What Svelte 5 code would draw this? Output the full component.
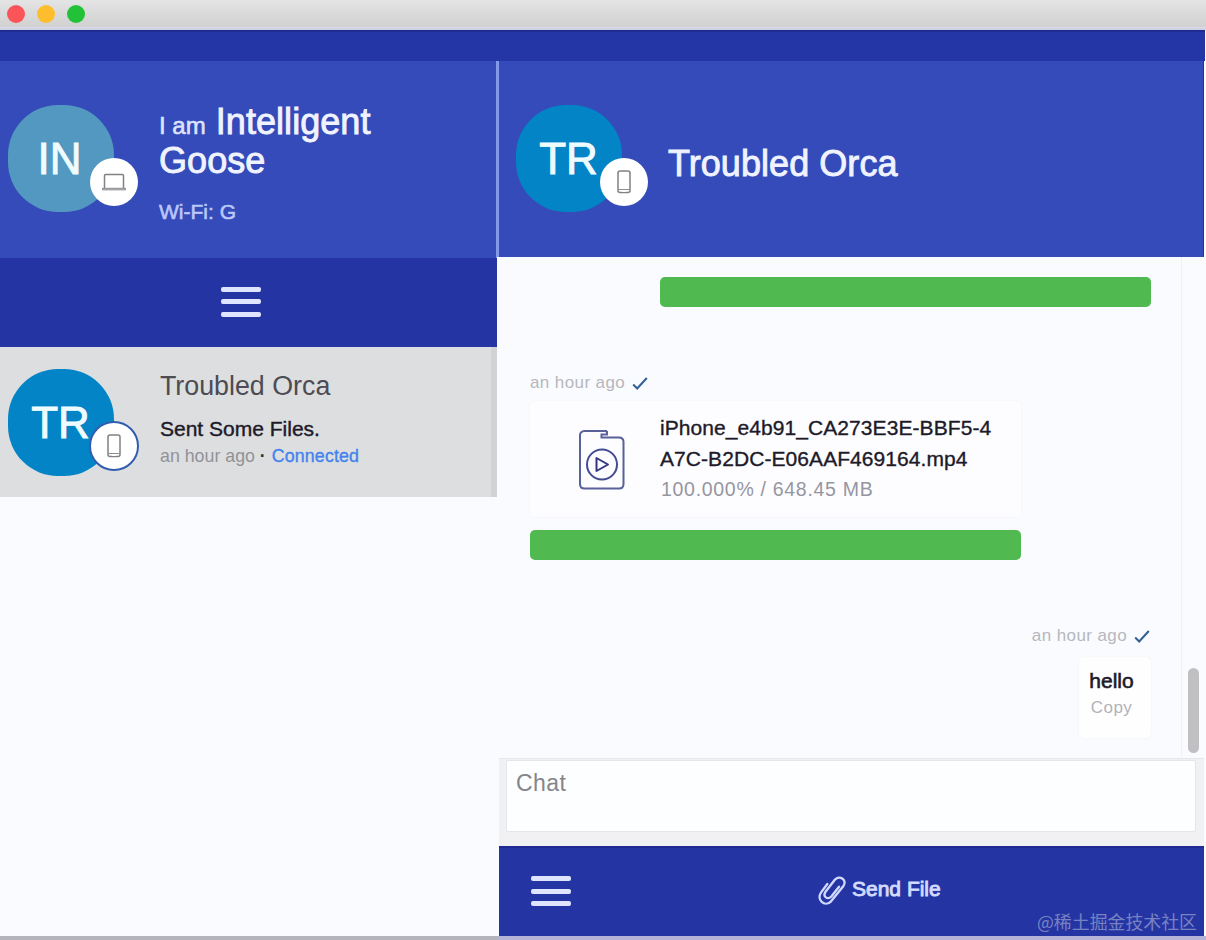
<script>
  const lights = ['#fa5558', '#fdbd2d', '#22c238'];
</script>

{#snippet phone()}
  <svg class="phone" viewBox="0 0 16 26" fill="none" stroke="#818186">
    <rect x="2" y="2" width="12" height="21.5" rx="2" stroke-width="1.5" />
    <path d="M2.500 20.500h11" stroke-width=".9" />
    <path d="M6 22.300h4" stroke="#fff" stroke-width="1.300" />
  </svg>
{/snippet}

{#snippet laptop()}
  <svg class="laptop" viewBox="0 0 26 20" fill="none" stroke="#818186">
    <path d="M3.500 16V3.700q0-1.200 1.200-1.200h16.600q1.200 0 1.200 1.200V16" stroke-width="1.500" />
    <path d="M1.500 16.300h23v1.500h-23z" stroke-width="1" />
  </svg>
{/snippet}

{#snippet check()}
  <svg class="check" viewBox="0 0 16 13" fill="none" stroke="#316094" stroke-width="2"><path d="M1.200 7.500l4 4L14.800 1" /></svg>
{/snippet}

{#snippet menu()}
  <span class="menu"><i></i><i></i><i></i></span>
{/snippet}

<div class="window">
  <div class="titlebar">
    {#each lights as color}<span class="light" style="background:{color}"></span>{/each}
  </div>
  <div class="band"></div>
  <div class="main">
    <aside>
      <header class="me">
        <div class="avatar teal">IN<span class="badge">{@render laptop()}</span></div>
        <div class="who">
          <h1><small>I am</small> Intelligent<br />Goose</h1>
          <p>Wi-Fi: G</p>
        </div>
      </header>
      <div class="bar">{@render menu()}</div>
      <div class="contact">
        <div class="avatar">TR<span class="badge outlined">{@render phone()}</span></div>
        <div class="summary">
          <div class="name">Troubled Orca</div>
          <div class="last">Sent Some Files.</div>
          <div class="status">an hour ago <b>·</b> <em>Connected</em></div>
        </div>
      </div>
    </aside>
    <section>
      <header class="peer">
        <div class="avatar">TR<span class="badge shifted">{@render phone()}</span></div>
        <h2>Troubled Orca</h2>
      </header>
      <div class="chat">
        <div class="messages">
          <div class="progress sent"></div>
          <div class="time">an hour ago {@render check()}</div>
          <div class="file">
            <svg class="video" viewBox="0 0 48 62" fill="none" stroke="#5a6099" stroke-width="2">
              <path d="M28 3.300V2H6.500Q2 2.500 2 6.500V55q0 4.500 4.500 4.500H41q4.500 0 4.500-4.500V13q0-4.500-4.500-4.500H23.500V5.500H29V2" />
              <circle cx="24" cy="35.500" r="15" stroke="#454b91" />
              <path d="M18.500 29v13l11.500-6.500z" stroke="#34377d" stroke-linejoin="round" />
            </svg>
            <div class="details">
              <div>iPhone_e4b91_CA273E3E-BBF5-4<br />A7C-B2DC-E06AAF469164.mp4</div>
              <p>100.000% / 648.45 MB</p>
            </div>
          </div>
          <div class="progress"></div>
          <div class="time right">an hour ago {@render check()}</div>
          <div class="bubble"><strong>hello</strong><span>Copy</span></div>
        </div>
        <div class="track"><div class="thumb"></div></div>
      </div>
      <div class="compose"><div class="input">Chat</div></div>
      <footer>
        {@render menu()}
        <div class="send">
          <svg viewBox="0 0 32 32" fill="none" stroke="#d0d8ff" stroke-width="2.500" stroke-linecap="round" stroke-linejoin="round">
            <path d="M11 8.500L4.400 17.500C-1 25 8 34 15 27L28 11C33 4.500 24-1.500 19 4L9.300 16.500C5.500 22 11.500 26 15.500 21.500L23.500 11.500" />
          </svg>
          Send File
        </div>
        <span class="watermark">@稀土掘金技术社区</span>
      </footer>
    </section>
  </div>
  <div class="edge"></div>
</div>

<style>
  :global(body) { margin: 0; }
  .window { width: 1206px; height: 940px; display: flex; flex-direction: column; overflow: hidden; background: #fafbfe; font-family: "Liberation Sans", Arial, sans-serif; color: #1d1a29; }
  h1, h2, p { margin: 0; font-weight: normal; }
  .titlebar { height: 30px; box-sizing: border-box; display: flex; gap: 12px; padding: 5px 7px; background: linear-gradient(#e5e4e5, #d2d1d2 88%, #d8d8e8 92%, #cbcde4); }
  .light { width: 18px; height: 18px; border-radius: 50%; }
  .band { height: 31px; box-sizing: border-box; background: #2435a5; border-top: 2px solid #202b92; margin-right: 1px; }
  .main { height: 875px; display: flex; }
  aside { width: 497px; }
  .me { height: 197px; box-sizing: border-box; display: flex; background: #344bb9; padding: 44px 0 0 8px; border-right: 1px solid #8198eb; }
  .avatar { position: relative; flex: none; width: 106px; height: 107px; border-radius: 50px; background: #0384c6; color: #effcff; font-size: 44px; line-height: 107px; text-align: center; box-sizing: border-box; padding-right: 1px; -webkit-text-stroke: .9px; }
  .teal { background: #5298c0; padding-right: 3px; }
  .badge { position: absolute; left: 82px; top: 53px; width: 48px; height: 48px; border-radius: 50%; background: #fff; display: flex; align-items: center; justify-content: center; box-sizing: border-box; }
  .shifted { left: 84px; }
  .outlined { width: 50px; height: 50px; border: 2px solid #315db0; left: 81px; top: 52px; }
  .phone { width: 16px; height: 26px; }
  .laptop { width: 26px; height: 20px; }
  .who { padding: 0 0 0 45px; margin-top: -3px; color: #f0f3ff; }
  h1, h2 { font-size: 36px; line-height: 39px; letter-spacing: .06px; -webkit-text-stroke: .9px; white-space: nowrap; }
  h1 small { font-size: 24px; line-height: 1; letter-spacing: 0; color: #dce3ff; -webkit-text-stroke: .6px; }
  .who p { margin-top: 20px; font-size: 21px; line-height: 24px; color: #bac7fb; -webkit-text-stroke: .6px; }
  .bar { height: 89px; box-sizing: border-box; display: flex; align-items: center; justify-content: center; padding: 0 15px 2px 0; background: #2435a3; }
  .menu { width: 40px; height: 30px; display: flex; flex-direction: column; justify-content: space-between; }
  .menu i { height: 5px; border-radius: 2px; background: #e0e5ff; }
  .contact { height: 150px; box-sizing: border-box; display: flex; padding: 22px 0 0 8px; background: #dddee0; border-right: 6px solid #d1d2d6; }
  .summary { padding-left: 46px; white-space: nowrap; }
  .name { font-size: 26.800px; line-height: 32px; margin-top: 1px; color: #4c4c52; }
  .last { font-size: 21px; line-height: 26px; margin-top: 14px; -webkit-text-stroke: .4px; }
  .status { font-size: 17.800px; line-height: 26px; padding-top: 1px; color: #929297; }
  .status b { color: #333; margin: 0 1px 0 0; }
  .status em { font-style: normal; letter-spacing: .15px; color: #4483ed; -webkit-text-stroke: .35px; }
  section { width: 709px; box-sizing: border-box; padding-right: 2px; }
  .peer { height: 196px; box-sizing: border-box; display: flex; padding: 44px 0 0 17px; background: #344bb9; border-right: 1px solid #233594; border-left: 2px solid #8198eb; color: #f0f3ff; }
  h2 { padding: 39px 0 0 46px; }
  .chat, .compose, footer { margin-left: 2px; }
  .chat { height: 501px; display: flex; }
  .messages { width: 652px; box-sizing: border-box; padding: 20px 0 0 31px; }
  .progress { width: 491px; height: 30px; border-radius: 5px; background: #50b950; }
  .sent { margin-left: 130px; }
  .time { height: 24px; margin-top: 64px; display: flex; align-items: center; gap: 7px; font-size: 17px; letter-spacing: .4px; color: #b6b7bd; }
  .check { width: 16px; height: 13px; }
  .file { width: 491px; height: 116px; box-sizing: border-box; margin: 6px 0 13px; display: flex; padding: 11px 0 0 48px; background: #fdfdff; border-radius: 5px; box-shadow: 0 0 3px #f1f2f8; }
  .video { width: 48px; height: 62px; flex: none; margin-top: 17px; }
  .details { padding: 1px 0 0 34px; font-size: 21px; line-height: 30.500px; letter-spacing: .07px; white-space: nowrap; -webkit-text-stroke: .35px; }
  .details p { margin-left: 1px; font-size: 19.500px; line-height: 30px; letter-spacing: .7px; color: #9696a1; -webkit-text-stroke: 0; }
  .right { justify-content: flex-end; }
  .right .check { margin-right: 1px; }
  .bubble { width: 72px; height: 81px; box-sizing: border-box; margin: 9px 0 0 auto; padding: 10px 7px 10px 0; background: #fefeff; border-radius: 5px; box-shadow: 0 0 3px #f1f2f8; display: flex; flex-direction: column; align-items: center; }
  .bubble strong { font-size: 21px; line-height: 27px; font-weight: normal; -webkit-text-stroke: .6px; }
  .bubble span { font-size: 17px; line-height: 27px; letter-spacing: .4px; color: #b2b2b8; }
  .track { width: 22px; margin-left: 30px; border-left: 1px solid #f0f1f5; display: flex; align-items: flex-end; justify-content: flex-end; padding-bottom: 5px; }
  .thumb { width: 11px; height: 85px; border-radius: 6px; background: #c0c0c2; margin-right: 5px; }
  .compose { height: 88px; box-sizing: border-box; padding: 1px 8px 14px 7px; background: #f1f1f4; border-top: 1px solid #e7e7ea; }
  .input { height: 72px; box-sizing: border-box; padding: 7px 9px; background: #fdfeff; border: 1px solid #e5e6e9; border-radius: 2px; font-size: 23px; line-height: 30px; letter-spacing: .45px; color: #85858a; }
  footer { position: relative; height: 90px; box-sizing: border-box; display: flex; align-items: center; padding: 0 0 2px 32px; background: #2435a3; border-top: 2px solid #202a92; }
  .send { display: flex; align-items: center; gap: 5px; margin-left: 246px; margin-top: -4px; color: #d3dbff; font-size: 21px; line-height: 26px; -webkit-text-stroke: .9px; }
  .send svg { width: 30px; height: 32px; margin-top: 3px; }
  .watermark { position: absolute; right: 7px; bottom: 2px; font: 17.900px/26px "Noto Sans CJK SC", sans-serif; color: #7882c2; white-space: nowrap; }
  .edge { height: 4px; background: linear-gradient(90deg, #b4b4bc 497px, #b5b4d8 499px); }
</style>
